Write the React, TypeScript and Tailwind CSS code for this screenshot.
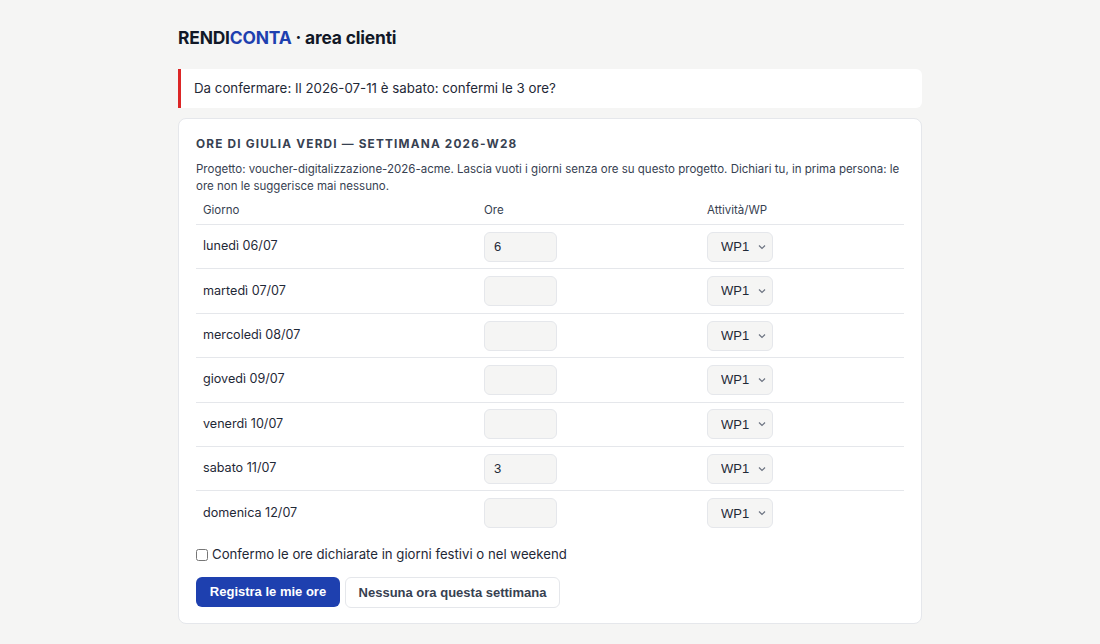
import { useState } from "react";

const giorni = [
  { label: "lunedì 06/07", ore: "6" },
  { label: "martedì 07/07", ore: "" },
  { label: "mercoledì 08/07", ore: "" },
  { label: "giovedì 09/07", ore: "" },
  { label: "venerdì 10/07", ore: "" },
  { label: "sabato 11/07", ore: "3" },
  { label: "domenica 12/07", ore: "" },
];

export default function App() {
  const [ore, setOre] = useState(giorni.map((g) => g.ore));
  const [conferma, setConferma] = useState(false);

  return (
    <div className="min-h-[644px] bg-[#f5f5f4] font-['Inter',sans-serif] text-[#1f2937]">
      <div className="mx-auto w-[744px] pt-[25px]">
        <h1 className="text-[17.4px] font-bold tracking-[-0.01em] text-[#111827]">
          RENDI<span className="text-[#1e40af]">CONTA</span> · area clienti
        </h1>

        {/* avviso */}
        <div className="mt-[18px] rounded-r-md border-l-[3px] border-[#dc2626] bg-white py-[10px] pl-[13px] text-[13.3px] leading-[19px] text-[#1f2937]">
          Da confermare: Il 2026-07-11 è sabato: confermi le 3 ore?
        </div>

        <div className="mt-[10px] rounded-lg border border-[#e5e7eb] bg-white px-[17px] pt-[17px] pb-[15px]">
          <h2 className="text-[11.8px] font-bold uppercase tracking-[0.1em] text-[#374151]">
            Ore di Giulia Verdi — settimana 2026-W28
          </h2>
          <p className="mt-[7px] text-[11.5px] leading-[17px] text-[#374151]">
            Progetto: voucher-digitalizzazione-2026-acme. Lascia vuoti i giorni senza ore su questo progetto. Dichiari tu, in prima persona: le ore non le suggerisce mai nessuno.
          </p>

          <table className="mt-[5px] w-full border-collapse text-left">
            <thead>
              <tr className="border-b border-[#e5e7eb] text-[11.5px] text-[#374151]">
                <th className="w-[281px] pb-[5px] pl-[7px] pt-[2px] font-normal">Giorno</th>
                <th className="w-[223px] pb-[5px] pl-[7px] pt-[2px] font-normal">Ore</th>
                <th className="pb-[5px] pl-[7px] pt-[2px] font-normal">Attività/WP</th>
              </tr>
            </thead>
            <tbody>
              {giorni.map((g, i) => (
                <tr key={g.label} className={i < giorni.length - 1 ? "border-b border-[#e5e7eb]" : ""}>
                  <td className="h-[44.4px] pl-[7px] text-[12.6px]">{g.label}</td>
                  <td className="pl-[7px]">
                    <input
                      type="text"
                      value={ore[i]}
                      onChange={(e) => setOre(ore.map((o, j) => (j === i ? e.target.value : o)))}
                      className="h-[30px] w-[73px] rounded-md border border-[#e5e7eb] bg-[#f5f5f4] px-[9px] font-['Liberation_Sans',sans-serif] text-[13px] outline-none"
                    />
                  </td>
                  <td className="pl-[7px]">
                    <div className="relative h-[30px] w-[66px]">
                      <select className="h-full w-full appearance-none rounded-md border border-[#e5e7eb] bg-[#f5f5f4] pl-[13px] font-['Liberation_Sans',sans-serif] text-[13px] text-[#1f2937] outline-none">
                        <option>WP1</option>
                        <option>WP2</option>
                      </select>
                      <svg
                        className="pointer-events-none absolute right-[7px] top-[12px]"
                        width="8"
                        height="6"
                        viewBox="0 0 8 6"
                        fill="none"
                        stroke="#6b7280"
                        strokeWidth="1.2"
                      >
                        <path d="M1 1.5l3 3 3-3" />
                      </svg>
                    </div>
                  </td>
                </tr>
              ))}
            </tbody>
          </table>

          <label className="mt-[10px] flex items-center gap-[4px] text-[13.2px] text-[#1f2937]">
            <input
              type="checkbox"
              checked={conferma}
              onChange={(e) => setConferma(e.target.checked)}
              className="h-[12px] w-[12px]"
            />
            Confermo le ore dichiarate in giorni festivi o nel weekend
          </label>

          <div className="mt-[12px] flex gap-[5px] font-['Liberation_Sans',sans-serif]">
            <button className="h-[30px] w-[144px] rounded-md bg-[#1e40af] text-[13px] font-bold text-white">
              Registra le mie ore
            </button>
            <button className="h-[31px] w-[215px] rounded-md border border-[#e5e7eb] bg-white text-[13px] font-bold text-[#374151]">
              Nessuna ora questa settimana
            </button>
          </div>
        </div>
      </div>
    </div>
  );
}
